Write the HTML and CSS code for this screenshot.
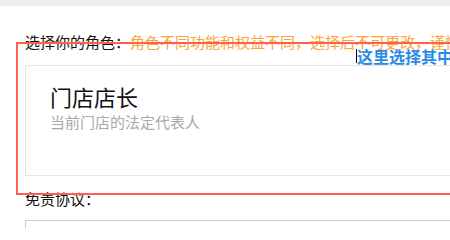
FILE: index.html
```html
<!DOCTYPE html>
<html lang="zh-CN">
<head>
<meta charset="utf-8">
<title>选择角色</title>
<link rel="stylesheet" href="styles.css">
</head>
<body>
<div class="topbar"></div>
<main class="page">
  <div class="label-row">
    <span class="label">选择你的角色：</span><span class="hint">角色不同功能和权益不同，选择后不可更改，谨慎选择</span>
  </div>
  <div class="role-card">
    <div class="role-title">门店店长</div>
    <div class="role-desc">当前门店的法定代表人</div>
  </div>
  <div class="label-row second">
    <span class="label">免责协议：</span>
  </div>
  <div class="agreement-box"></div>
</main>
<div class="annotation-box"></div>
<div class="annotation-text"><span class="caret"></span>这里选择其中一个角色</div>
</body>
</html>
```
FILE: styles.css
```css
html, body {
  margin: 0;
  padding: 0;
  background: #fff;
  overflow: hidden;
  width: 450px;
  height: 228px;
}
body {
  font-family: "Noto Sans CJK SC", "Noto Sans", sans-serif;
  color: #111;
  position: relative;
}
.topbar {
  height: 6px;
  background: #eeeeee;
}
.page {
  padding: 0 0 0 25px;
  width: 600px;
}
.label-row {
  margin-top: 26px;
  font-size: 15px;
  line-height: 20px;
  white-space: nowrap;
}
.label { color: #111; }
.hint { color: #f8a63c; }
.role-card {
  margin-top: 13px;
  border: 1px solid #e6e6e6;
  padding: 0 0 0 24px;
  box-sizing: border-box;
  height: 111px;
}
.role-title {
  margin-top: 15px;
  font-size: 22px;
  line-height: 30px;
  color: #111;
}
.role-desc {
  margin-top: 2px;
  font-size: 15px;
  line-height: 18px;
  color: #a9a9a9;
}
.label-row.second {
  margin-top: 13px;
}
.agreement-box {
  margin-top: 11px;
  height: 40px;
  border: 1px solid #cccccc;
}
.annotation-box {
  position: absolute;
  left: 16px;
  top: 42px;
  width: 600px;
  height: 149px;
  border: 2px solid #ff5f4f;
}
.annotation-text {
  position: absolute;
  left: 356px;
  top: 46px;
  font-size: 16px;
  line-height: 20px;
  font-weight: bold;
  color: #2b8ae6;
  white-space: nowrap;
  display: flex;
  align-items: center;
}
.caret {
  width: 1px;
  height: 14px;
  background: #000;
}
```
